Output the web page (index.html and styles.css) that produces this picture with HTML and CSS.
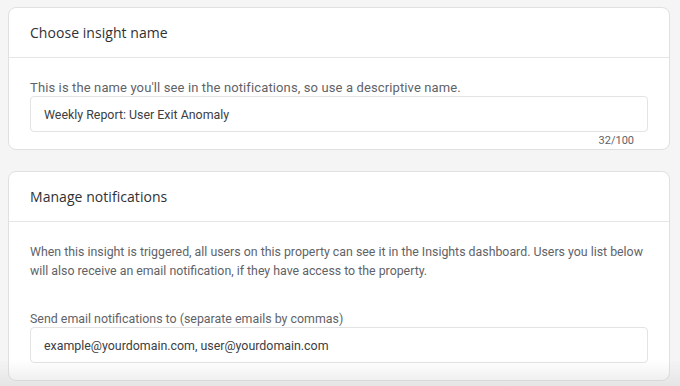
FILE: index.html
```html
<!DOCTYPE html>
<html>
<head>
<meta charset="utf-8">
<link rel="stylesheet" href="styles.css">
</head>
<body>
<div class="page">
  <section class="card">
    <div class="card-header"><h2 class="card-title">Choose insight name</h2></div>
    <div class="card-body body-name">
      <p class="hint hint-wide">This is the name you'll see in the notifications, so use a descriptive name.</p>
      <div class="field">Weekly Report: User Exit Anomaly</div>
      <div class="counter">32/100</div>
    </div>
  </section>
  <section class="card">
    <div class="card-header"><h2 class="card-title">Manage notifications</h2></div>
    <div class="card-body body-notif">
      <p class="desc">When this insight is triggered, all users on this property can see it in the Insights dashboard. Users you list below will also receive an email notification, if they have access to the property.</p>
      <p class="hint">Send email notifications to (separate emails by commas)</p>
      <div class="field">example@yourdomain.com, user@yourdomain.com</div>
    </div>
  </section>
</div>
<div class="bottom-shade"></div>
</body>
</html>
```
FILE: styles.css
```css
html, body {
  margin: 0;
  padding: 0;
  background: #f5f5f5;
  height: 100%;
  overflow: hidden;
}
body {
  font-family: Roboto, "Liberation Sans", sans-serif;
  color: #5f6368;
}
.page {
  padding: 7px 10px 0 8px;
  display: flex;
  flex-direction: column;
  gap: 21px;
}
.card {
  background: #fff;
  border: 1px solid #e0e0e0;
  border-radius: 8px;
}
.card-header {
  height: 49px;
  display: flex;
  align-items: center;
  padding: 0 21px;
  border-bottom: 1px solid #e6e6e6;
}
.card-title {
  margin: 0;
  font-family: "Open Sans", Roboto, sans-serif;
  font-size: 14px;
  font-weight: 400;
  color: #303134;
  letter-spacing: 0.05px;
}
.card-body {
  padding: 0 21px;
}
.body-name {
  padding-top: 22px;
}
.body-notif {
  padding-top: 21px;
  padding-bottom: 17px;
}
.hint {
  margin: 0;
  font-size: 12.4px;
  line-height: 16px;
  color: #5f6368;
}
.hint-wide {
  font-size: 13px;
  letter-spacing: 0.12px;
}
.desc {
  margin: 0 -4px 30px 0;
  font-size: 12.35px;
  line-height: 19px;
  color: #5f6368;
}
.field {
  height: 34px;
  border: 1px solid #e3e3e3;
  border-radius: 4px;
  padding: 0 13px;
  display: flex;
  align-items: center;
  font-size: 12.4px;
  color: #3c4043;
}
.counter {
  text-align: right;
  font-size: 11px;
  line-height: 17px;
  color: #5f6368;
  padding-right: 14px;
}
.bottom-shade {
  position: fixed;
  left: 0;
  right: 0;
  bottom: 0;
  height: 26px;
  background: linear-gradient(to bottom, rgba(200,200,200,0) 0%, rgba(200,200,200,0.25) 70%, rgba(200,200,200,0.35) 100%);
  pointer-events: none;
}
```
